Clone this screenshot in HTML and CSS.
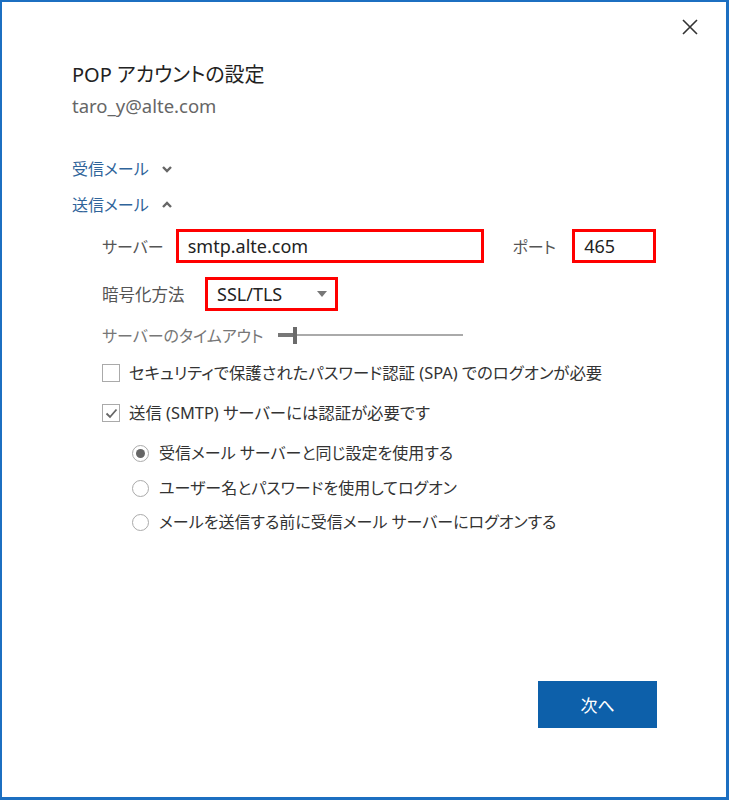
FILE: index.html
```html
<!DOCTYPE html>
<html lang="ja">
<head>
    <meta charset="UTF-8">
    <meta name="viewport" content="width=device-width, initial-scale=1.0">
    <title>POP アカウントの設定</title>
    <link rel="stylesheet" href="styles.css">
</head>
<body>
    <div class="dialog">
        <button class="close-btn" aria-label="閉じる">
            <svg width="16" height="16" viewBox="0 0 16 16"><path d="M1 1 L15 15 M15 1 L1 15" stroke="#333" stroke-width="1.6" fill="none"/></svg>
        </button>

        <h1 class="title">POP アカウントの設定</h1>
        <div class="email">taro_y@alte.com</div>

        <div class="toggle toggle-first">受信メール
            <svg class="chevron" width="10" height="8" viewBox="0 0 10 8"><polyline points="1,2 5,6 9,2" stroke="#666" stroke-width="2.4" fill="none"/></svg>
        </div>
        <div class="toggle">送信メール
            <svg class="chevron" width="10" height="8" viewBox="0 0 10 8"><polyline points="1,6 5,2 9,6" stroke="#666" stroke-width="2.4" fill="none"/></svg>
        </div>

        <div class="settings">
            <div class="row">
                <span class="label label-server">サーバー</span>
                <div class="field field-server">smtp.alte.com</div>
                <span class="label label-port">ポート</span>
                <div class="field field-port">465</div>
            </div>
            <div class="row row-enc">
                <span class="label label-enc">暗号化方法</span>
                <div class="field field-select">SSL/TLS
                    <svg class="caret" width="10" height="6" viewBox="0 0 10 6"><polygon points="0,0 10,0 5,6" fill="#777"/></svg>
                </div>
            </div>
            <div class="row row-timeout">
                <span class="label label-timeout">サーバーのタイムアウト</span>
                <div class="slider">
                    <span class="slider-fill"></span>
                    <span class="slider-thumb"></span>
                    <span class="slider-track"></span>
                </div>
            </div>

            <div class="check-row check-first">
                <span class="checkbox"></span>
                <span>セキュリティで保護されたパスワード認証 (SPA) でのログオンが必要</span>
            </div>
            <div class="check-row">
                <span class="checkbox">
                    <svg width="13" height="11" viewBox="0 0 13 11"><polyline points="1.5,5.5 5,9 11.5,1.5" stroke="#666" stroke-width="1.8" fill="none"/></svg>
                </span>
                <span>送信 (SMTP) サーバーには認証が必要です</span>
            </div>

            <div class="radios">
                <div class="radio-row">
                    <span class="radio selected"></span>
                    <span>受信メール サーバーと同じ設定を使用する</span>
                </div>
                <div class="radio-row">
                    <span class="radio"></span>
                    <span>ユーザー名とパスワードを使用してログオン</span>
                </div>
                <div class="radio-row">
                    <span class="radio"></span>
                    <span>メールを送信する前に受信メール サーバーにログオンする</span>
                </div>
            </div>
        </div>

        <div class="footer">
            <button class="next-btn">次へ</button>
        </div>
    </div>
</body>
</html>
```

FILE: styles.css
```css
body {
    margin: 0;
    font-family: 'Noto Sans', 'Noto Sans CJK JP', sans-serif;
    font-feature-settings: "palt";
    background: #fff;
    color: #333;
}
.dialog {
    position: relative;
    height: 800px;
    box-sizing: border-box;
    border: 2px solid #1c6fc1;
    border-right-width: 3px;
    border-bottom-width: 3px;
    padding: 58px 70px 0 70px;
}
.close-btn {
    position: absolute;
    top: 13px;
    right: 24px;
    width: 24px;
    height: 24px;
    padding: 4px;
    border: none;
    background: none;
}
.title {
    margin: 0;
    font-size: 20px;
    line-height: 30px;
    font-weight: 400;
    color: #222;
}
.email {
    margin-top: 4px;
    font-size: 18.5px;
    line-height: 24px;
    color: #666;
}
.toggle {
    display: flex;
    align-items: center;
    margin-top: 12px;
    font-size: 16px;
    line-height: 24px;
    color: #2f649a;
}
.toggle-first {
    margin-top: 39px;
}
.chevron {
    margin-left: 13px;
}
.settings {
    padding-left: 30px;
}
.row {
    display: flex;
    align-items: center;
    margin-top: 12px;
}
.label {
    font-size: 16px;
    color: #555;
}
.label-server {
    width: 74px;
}
.label-port {
    margin-left: 29px;
    width: 60px;
}
.label-enc {
    font-size: 16.5px;
    width: 103px;
}
.field {
    box-sizing: border-box;
    height: 34px;
    border: 3px solid #f00;
    display: flex;
    align-items: center;
    padding-left: 9px;
    font-size: 18px;
    color: #222;
}
.field-server {
    width: 309px;
}
.field-port {
    width: 84px;
}
.row-enc {
    margin-top: 14px;
}
.field-select {
    width: 133px;
    justify-content: space-between;
    padding-right: 8px;
}
.row-timeout {
    margin-top: 12px;
}
.label-timeout {
    color: #777;
    width: 176px;
}
.slider {
    display: flex;
    align-items: center;
    width: 185px;
    height: 20px;
}
.slider-fill {
    width: 15px;
    height: 4px;
    background: #777;
}
.slider-thumb {
    width: 4px;
    height: 17px;
    background: #6b6b6b;
}
.slider-track {
    flex: 1;
    height: 2px;
    background: #aaa;
}
.check-row {
    display: flex;
    align-items: center;
    margin-top: 16px;
    font-size: 16.4px;
    line-height: 24px;
    color: #333;
}
.check-first {
    margin-top: 14px;
}
.checkbox {
    box-sizing: border-box;
    width: 18px;
    height: 18px;
    border: 1px solid #aaa;
    margin-right: 9px;
    display: flex;
    align-items: center;
    justify-content: center;
}
.radios {
    padding-left: 30px;
    margin-top: 16px;
}
.radio-row {
    display: flex;
    align-items: center;
    margin-top: 9.5px;
    font-size: 16px;
    line-height: 25px;
    color: #333;
}
.radio-row:first-child {
    margin-top: 0;
}
.radio {
    box-sizing: border-box;
    width: 17px;
    height: 17px;
    border: 1px solid #aaa;
    border-radius: 50%;
    margin-right: 10px;
    display: flex;
    align-items: center;
    justify-content: center;
}
.radio.selected::after {
    content: "";
    width: 9px;
    height: 9px;
    border-radius: 50%;
    background: #666;
}
.footer {
    position: absolute;
    right: 69px;
    bottom: 69px;
}
.next-btn {
    width: 119px;
    height: 47px;
    border: none;
    background: #0d60aa;
    color: #fff;
    font-family: 'Noto Sans CJK JP', sans-serif;
    font-size: 17px;
}
```
